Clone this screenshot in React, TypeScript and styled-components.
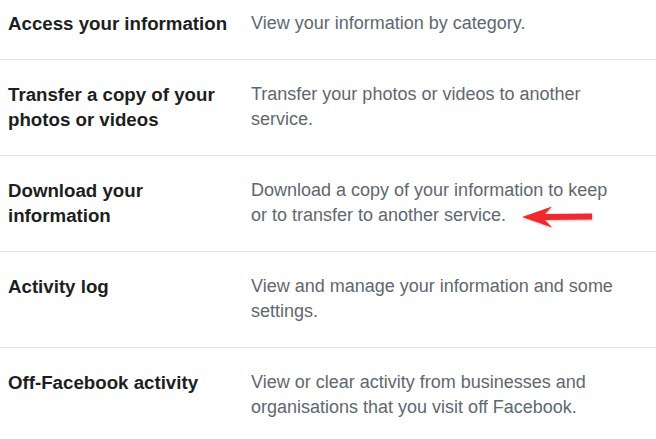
import styled, { createGlobalStyle } from "styled-components";

const GlobalStyle = createGlobalStyle`
  html, body {
    margin: 0;
    padding: 0;
    background: #fff;
    overflow: hidden;
  }
  body {
    font-family: "Liberation Sans", Arial, Helvetica, sans-serif;
  }
`;

const Page = styled.div`
  width: 656px;
  height: 439px;
  overflow: hidden;
  position: relative;
`;

const List = styled.div`
  display: flex;
  flex-direction: column;
  margin-top: -11px;
`;

const Item = styled.div<{ $last?: boolean }>`
  display: grid;
  grid-template-columns: 222px 372px;
  column-gap: 21px;
  padding: 22px 0 23px 8px;
  border-bottom: ${(p) => (p.$last ? "none" : "1px solid #e5e6e8")};
`;

const Title = styled.div`
  font-size: 18.7px;
  line-height: 25px;
  font-weight: 700;
  color: #1c1e21;
`;

const Desc = styled.div`
  font-size: 18px;
  line-height: 25px;
  color: #606770;
`;

const Arrow = styled.svg`
  position: absolute;
  left: 521px;
  top: 205px;
  filter: drop-shadow(1px 1px 1px rgba(0, 0, 0, 0.25));
`;

const rows = [
  {
    title: "Access your information",
    desc: "View your information by category.",
  },
  {
    title: "Transfer a copy of your photos or videos",
    desc: "Transfer your photos or videos to another service.",
  },
  {
    title: "Download your information",
    desc: "Download a copy of your information to keep or to transfer to another service.",
  },
  {
    title: "Activity log",
    desc: "View and manage your information and some settings.",
  },
  {
    title: "Off-Facebook activity",
    desc: "View or clear activity from businesses and organisations that you visit off Facebook.",
  },
];

export default function App() {
  return (
    <Page>
      <GlobalStyle />
      <List>
        {rows.map((r, i) => (
          <Item key={r.title} $last={i === rows.length - 1}>
            <Title>{r.title}</Title>
            <Desc>{r.desc}</Desc>
          </Item>
        ))}
      </List>
      <Arrow width="72" height="24" viewBox="0 0 72 24">
        <path d="M1 12 L31 1.5 L24 9 L71 8.5 L71 14.5 L24 15 L31 22.5 Z" fill="#ee2a2f" />
      </Arrow>
    </Page>
  );
}
